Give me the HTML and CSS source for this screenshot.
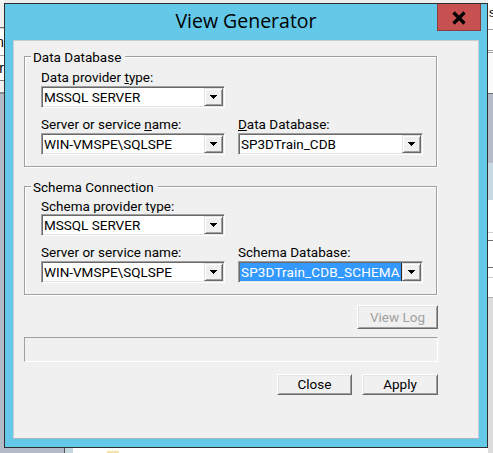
FILE: index.html
```html
<!DOCTYPE html>
<html lang="en">
<head>
<meta charset="utf-8">
<title>View Generator</title>
<link rel="stylesheet" href="styles.css">
</head>
<body>
<div class="desktop">
  <div class="bg-top"></div>

  <div class="bg-left">
    <span class="bg-word bg-word-1">Item</span>
    <span class="bg-word bg-word-2">Filter</span>
  </div>

  <div class="window">
    <div class="titlebar">
      <div class="title">View Generator</div>
      <div class="close-btn">
        <svg width="14" height="14" viewBox="0 0 14 14" aria-hidden="true">
          <path d="M1.5 1.5L12.5 12.5M12.5 1.5L1.5 12.5" stroke="#000" stroke-width="3.2"/>
        </svg>
      </div>
    </div>

    <div class="client">
      <div class="panel">
        <section class="group">
          <div class="group-title">Data Database</div>
          <div class="row">
            <div class="field field-left">
              <div class="label">Data provider <u>t</u>ype:</div>
              <div class="combo">
                <span class="combo-text">MSSQL SERVER</span>
                <span class="combo-btn"><svg width="7" height="4" viewBox="0 0 7 4"><path d="M0 0H7V1H6V2H5V3H4V4H3V3H2V2H1V1H0Z" fill="#000"/></svg></span>
              </div>
            </div>
          </div>
          <div class="row">
            <div class="field field-left">
              <div class="label">Server or service <u>n</u>ame:</div>
              <div class="combo">
                <span class="combo-text">WIN-VMSPE\SQLSPE</span>
                <span class="combo-btn"><svg width="7" height="4" viewBox="0 0 7 4"><path d="M0 0H7V1H6V2H5V3H4V4H3V3H2V2H1V1H0Z" fill="#000"/></svg></span>
              </div>
            </div>
            <div class="field field-right">
              <div class="label"><u>D</u>ata Database:</div>
              <div class="combo">
                <span class="combo-text">SP3DTrain_CDB</span>
                <span class="combo-btn"><svg width="7" height="4" viewBox="0 0 7 4"><path d="M0 0H7V1H6V2H5V3H4V4H3V3H2V2H1V1H0Z" fill="#000"/></svg></span>
              </div>
            </div>
          </div>
        </section>

        <section class="group group-schema">
          <div class="group-title">Schema Connection</div>
          <div class="row">
            <div class="field field-left">
              <div class="label label-clipped">Schema provider type:</div>
              <div class="combo">
                <span class="combo-text">MSSQL SERVER</span>
                <span class="combo-btn"><svg width="7" height="4" viewBox="0 0 7 4"><path d="M0 0H7V1H6V2H5V3H4V4H3V3H2V2H1V1H0Z" fill="#000"/></svg></span>
              </div>
            </div>
          </div>
          <div class="row">
            <div class="field field-left">
              <div class="label">Server or service name:</div>
              <div class="combo">
                <span class="combo-text">WIN-VMSPE\SQLSPE</span>
                <span class="combo-btn"><svg width="7" height="4" viewBox="0 0 7 4"><path d="M0 0H7V1H6V2H5V3H4V4H3V3H2V2H1V1H0Z" fill="#000"/></svg></span>
              </div>
            </div>
            <div class="field field-right">
              <div class="label">Schema Database:</div>
              <div class="combo">
                <span class="combo-text combo-text-selected">SP3DTrain_CDB_SCHEMA</span>
                <span class="combo-btn"><svg width="7" height="4" viewBox="0 0 7 4"><path d="M0 0H7V1H6V2H5V3H4V4H3V3H2V2H1V1H0Z" fill="#000"/></svg></span>
              </div>
            </div>
          </div>
        </section>

        <button class="btn btn-viewlog" disabled>View Log</button>

        <div class="status"></div>

        <div class="actions">
          <button class="btn btn-close">Close</button>
          <button class="btn btn-apply">Apply</button>
        </div>
      </div>
    </div>
  </div>

  <div class="bg-right">
    <span class="bg-word bg-word-3">sort</span>
  </div>

  <div class="bg-bottom"></div>
</div>
</body>
</html>
```

FILE: styles.css
```css
* {
  box-sizing: border-box;
}

html,
body {
  margin: 0;
  padding: 0;
}

body {
  width: 493px;
  height: 453px;
  overflow: hidden;
  background: #fff;
  font-family: Roboto, "Liberation Sans", sans-serif;
  font-size: 13.5px;
  color: #000;
}

/* ---- desktop behind the dialog ---- */

.desktop {
  display: grid;
  grid-template-columns: 4px 484px 5px;
  grid-template-rows: 3px 445px 5px;
  width: 493px;
  height: 453px;
}

.bg-top {
  grid-column: 1 / 4;
  grid-row: 1;
  background: linear-gradient(to right, #f7f7f7 0 4px, #eeeeee 4px 488px, #fff 488px);
}

.bg-left {
  grid-column: 1;
  grid-row: 2 / 4;
  overflow: hidden;
  display: flex;
  flex-direction: column;
  align-items: flex-end;
  background: linear-gradient(to bottom,
    #efefef 0 24px,
    #6d6d6d 24px 25px,
    #d5d5d5 25px 26px,
    #fff 26px 52px,
    #a0a0a0 52px 53px,
    #fff 53px 77px,
    #7a7a7a 77px 78px,
    #f0f0f0 78px 89px,
    #8a8a8a 89px 91px,
    #b3bac8 91px);
}

.bg-right {
  grid-column: 3;
  grid-row: 2 / 4;
  overflow: hidden;
  padding-left: 1px;
  background: linear-gradient(to bottom,
    #fff 0 26px,
    #a0a0a0 26px 27px,
    #fff 27px 47px,
    #a0a0a0 47px 48px,
    #fff 48px 49px,
    #a0a0a0 49px 50px,
    #fbfbfb 50px 90px,
    #6d6d6d 90px 91px,
    #b5bbc8 91px 160px,
    #c8dbe3 160px 197px,
    #fff 197px 229px,
    #d0d0d0 229px 230px,
    #fff 230px 237px,
    #707070 237px 238px,
    #fff 238px 264px,
    #707070 264px 265px,
    #fff 265px 274px,
    #d0d0d0 274px 275px,
    #fff 275px 294px,
    #b0b0b0 294px 295px,
    #dcdcdc 295px);
}

.bg-bottom {
  grid-column: 2;
  grid-row: 3;
  background:
    linear-gradient(#f5e2a4, #f5e2a4) 103px 3px / 12px 2px no-repeat,
    linear-gradient(to right,
      #b3bac8 0 60px,
      #555 60px 61px,
      #c5d8de 61px 69px,
      #fff 69px);
}

.bg-word {
  display: block;
  white-space: nowrap;
  font-family: "Liberation Sans", sans-serif;
  font-size: 14px;
  line-height: 14px;
  height: 14px;
}

.bg-word-1 {
  margin-top: 32px;
}

.bg-word-2 {
  margin-top: 12px;
}

.bg-word-3 {
  margin-top: 3px;
  font-size: 13px;
}

/* ---- dialog window ---- */

.window {
  grid-column: 2;
  grid-row: 2;
  display: flex;
  flex-direction: column;
  border: 1px solid #2e2e2e;
  background: #64c8e9;
}

.titlebar {
  height: 36px;
  flex: none;
  display: grid;
  grid-template-columns: 1fr auto 1fr;
}

.title {
  grid-column: 2;
  align-self: center;
  margin-bottom: 3px;
  font-family: "Open Sans", "Noto Sans", sans-serif;
  font-size: 19.5px;
  line-height: 26px;
  color: #000;
  white-space: nowrap;
}

.close-btn {
  grid-column: 3;
  justify-self: end;
  align-self: start;
  width: 44px;
  height: 27px;
  margin-right: 6px;
  display: flex;
  align-items: center;
  justify-content: center;
  background: #c75050;
  border: 1px solid #8e3d3d;
  border-top: 0;
}

.close-btn svg {
  display: block;
  margin-top: 1px;
}

.client {
  flex: 1;
  margin: 0 8px 8px;
  background: #f0f0f0;
  border: 1px solid #c3cdd2;
  border-bottom-color: #a9b5bc;
  padding: 15px 0 0 10px;
}

.panel {
  width: 414px;
  display: flex;
  flex-direction: column;
}

/* ---- group boxes ---- */

.group {
  position: relative;
  width: 413px;
  border: 1px solid #a0a0a0;
  box-shadow: inset 1px 1px #fff, 1px 1px #fff;
  padding: 13px 0 11px 16px;
}

.group-schema {
  margin-top: 19px;
  padding-top: 12px;
}

.group-title {
  position: absolute;
  top: -7px;
  left: 6px;
  padding: 0 4px 0 2px;
  background: #f0f0f0;
  line-height: 15px;
  white-space: nowrap;
}

.row {
  display: flex;
  gap: 13px;
}

.row + .row {
  margin-top: 9px;
}

.field-left {
  width: 184px;
}

.field-right {
  width: 185px;
}

.label {
  line-height: 15px;
  margin-bottom: 1px;
  white-space: nowrap;
}

.label u {
  text-decoration-thickness: 1px;
  text-underline-offset: 1px;
}

.label-clipped {
  height: 14px;
  margin-bottom: 1px;
  overflow: hidden;
}

/* ---- combo boxes ---- */

.combo {
  display: flex;
  height: 22px;
  padding: 1px;
  background: #fff;
  border: 1px solid;
  border-color: #a0a0a0 #fff #fff #a0a0a0;
  box-shadow: inset 1px 1px #696969, inset -1px -1px #e3e3e3;
}

.combo-text {
  flex: 1;
  min-width: 0;
  overflow: hidden;
  white-space: nowrap;
  line-height: 18px;
  padding-left: 1px;
}

.combo-text-selected {
  background: #3399ff;
  color: #fff;
  letter-spacing: 0.15px;
  box-shadow: inset -1px 0 #3a2a1a;
}

.combo-btn {
  flex: none;
  width: 19px;
  height: 18px;
  display: flex;
  align-items: center;
  justify-content: center;
  background: #f0f0f0;
  border: 1px solid;
  border-color: #e3e3e3 #696969 #696969 #e3e3e3;
  box-shadow: inset 1px 1px #fff, inset -1px -1px #a0a0a0;
}

.combo-btn svg {
  display: block;
}

/* ---- buttons and status ---- */

.btn {
  font: inherit;
  color: #000;
  padding: 0;
  margin: 0;
  background: #f0f0f0;
  border: 1px solid;
  border-color: #fff #696969 #696969 #fff;
  box-shadow: inset 1px 1px #e3e3e3, inset -1px -1px #a0a0a0;
  border-radius: 0;
  white-space: nowrap;
}

.btn-viewlog {
  align-self: flex-end;
  margin-top: 10px;
  width: 81px;
  height: 24px;
  line-height: 20px;
  color: #a0a0a0;
}

.status {
  margin-top: 8px;
  height: 25px;
  border: 1px solid;
  border-color: #a0a0a0 #fff #fff #a0a0a0;
}

.actions {
  display: flex;
  justify-content: flex-end;
  gap: 10px;
  margin-top: 12px;
}

.btn-close,
.btn-apply {
  height: 21px;
  line-height: 17px;
}

.btn-close {
  width: 75px;
}

.btn-apply {
  width: 76px;
}
```
